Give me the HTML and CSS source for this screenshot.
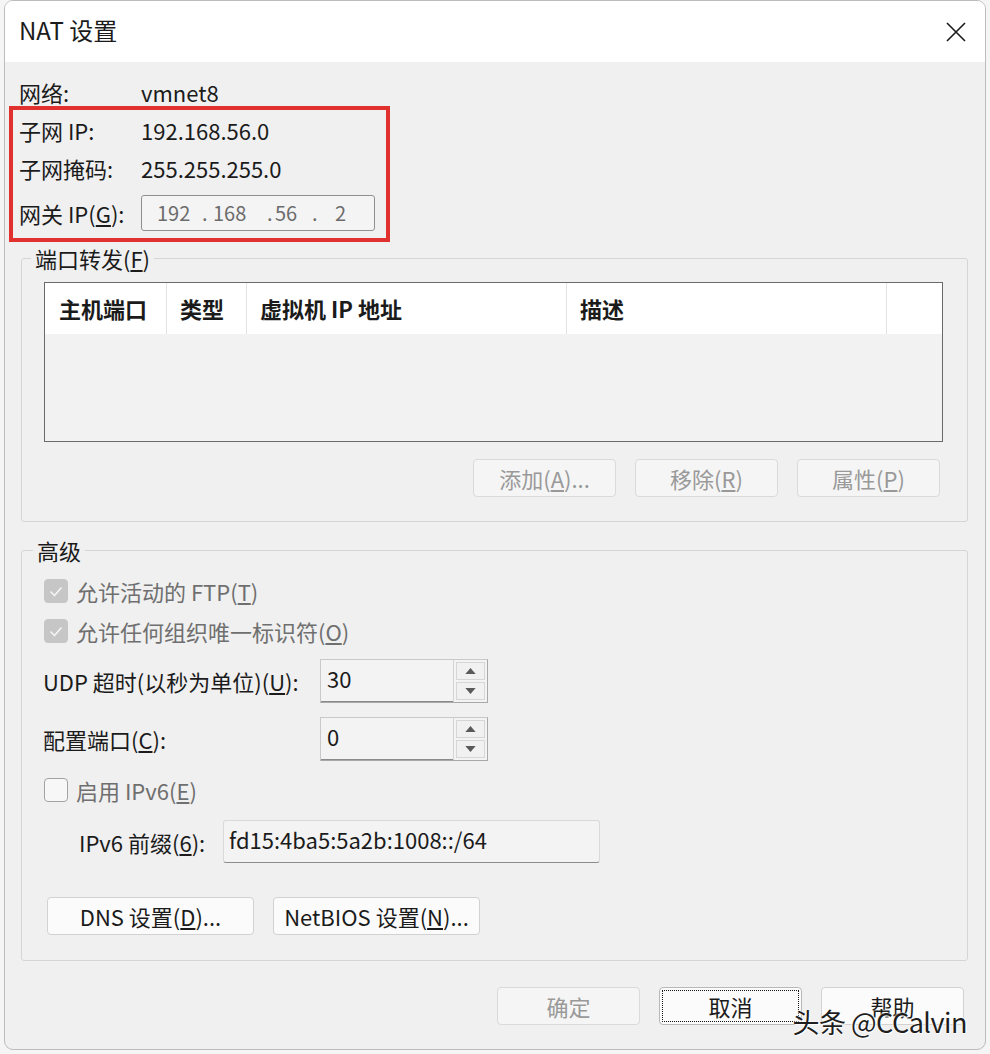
FILE: index.html
```html
<!DOCTYPE html>
<html lang="zh-CN">
<head>
<meta charset="utf-8">
<title>NAT 设置</title>
<link rel="stylesheet" href="styles.css">
</head>
<body>
<div class="window">
  <div class="titlebar">
    <span class="title">NAT 设置</span>
    <svg class="close" viewBox="0 0 20 20" width="20" height="20"><path d="M1 1 L19 19 M19 1 L1 19" stroke="#1a1a1a" stroke-width="1.6" fill="none"/></svg>
  </div>
  <div class="content">
    <div class="info-row net"><span class="lbl">网络:</span><span class="val">vmnet8</span></div>
    <div class="highlight">
      <div class="info-row"><span class="lbl">子网 IP:</span><span class="val">192.168.56.0</span></div>
      <div class="info-row"><span class="lbl">子网掩码:</span><span class="val">255.255.255.0</span></div>
      <div class="info-row gw"><span class="lbl">网关 IP(<u>G</u>):</span>
        <div class="ipbox"><span class="oct o1">192</span><span class="dot d1">.</span><span class="oct o2">168</span><span class="dot d2">.</span><span class="oct o3">56</span><span class="dot d3">.</span><span class="oct">2</span></div>
      </div>
    </div>

    <fieldset class="group pf">
      <legend>端口转发(<u>F</u>)</legend>
      <div class="table">
        <div class="thead">
          <div class="th c1">主机端口</div>
          <div class="th c2">类型</div>
          <div class="th c3">虚拟机 IP 地址</div>
          <div class="th c4">描述</div>
          <div class="th c5"></div>
        </div>
        <div class="tbody"></div>
      </div>
      <div class="btnrow">
        <button class="btn" disabled>添加(<u>A</u>)...</button>
        <button class="btn" disabled>移除(<u>R</u>)</button>
        <button class="btn" disabled>属性(<u>P</u>)</button>
      </div>
    </fieldset>

    <fieldset class="group adv">
      <legend>高级</legend>
      <div class="cbrow"><span class="cb checked"><svg viewBox="0 0 24 24" width="24" height="24"><path d="M6.5 12.5 L10.5 16.5 L17.5 8.5" stroke="#f4f4f4" stroke-width="1.6" fill="none"/></svg></span>允许活动的 FTP(<u>T</u>)</div>
      <div class="cbrow"><span class="cb checked"><svg viewBox="0 0 24 24" width="24" height="24"><path d="M6.5 12.5 L10.5 16.5 L17.5 8.5" stroke="#f4f4f4" stroke-width="1.6" fill="none"/></svg></span>允许任何组织唯一标识符(<u>O</u>)</div>
      <div class="spinrow udp"><span class="slbl">UDP 超时(以秒为单位)(<u>U</u>):</span>
        <div class="spin"><span class="stxt">30</span><span class="arrows"><span class="arrow"><svg viewBox="0 0 12 7" width="11" height="6"><path d="M6 0 L12 7 L0 7 Z" fill="#5a5a5a"/></svg></span><span class="arrow"><svg viewBox="0 0 12 7" width="11" height="6"><path d="M0 0 L12 0 L6 7 Z" fill="#5a5a5a"/></svg></span></span></div>
      </div>
      <div class="spinrow cfg"><span class="slbl">配置端口(<u>C</u>):</span>
        <div class="spin"><span class="stxt">0</span><span class="arrows"><span class="arrow"><svg viewBox="0 0 12 7" width="11" height="6"><path d="M6 0 L12 7 L0 7 Z" fill="#5a5a5a"/></svg></span><span class="arrow"><svg viewBox="0 0 12 7" width="11" height="6"><path d="M0 0 L12 0 L6 7 Z" fill="#5a5a5a"/></svg></span></span></div>
      </div>
      <div class="cbrow v6cb"><span class="cb"></span>启用 IPv6(<u>E</u>)</div>
      <div class="v6row"><span class="v6lbl">IPv6 前缀(<u>6</u>):</span><div class="v6box">fd15:4ba5:5a2b:1008::/64</div></div>
      <div class="dnsrow">
        <button class="btn wide">DNS 设置(<u>D</u>)...</button>
        <button class="btn wide">NetBIOS 设置(<u>N</u>)...</button>
      </div>
    </fieldset>

    <div class="footer">
      <button class="btn" disabled>确定</button>
      <button class="btn focus">取消</button>
      <button class="btn">帮助</button>
    </div>
  </div>
  <div class="watermark">头条 @CCalvin</div>
</div>
</body>
</html>
```

FILE: styles.css
```css
* { box-sizing: border-box; }
html, body { margin: 0; padding: 0; }
body {
  width: 990px;
  height: 1054px;
  overflow: hidden;
  background: #f5f5f5;
  font-family: "Noto Sans CJK SC", "Liberation Sans", sans-serif;
  font-size: 22px;
  color: #1b1b1b;
}
u { text-decoration: underline; text-underline-offset: 2px; }

.window {
  position: relative;
  margin-left: 4px;
  width: 982px;
  height: 1050px;
  border: 1px solid #bcbcbc;
  border-radius: 9px;
  background: #f0f0f0;
  overflow: hidden;
}
.titlebar {
  height: 61px;
  background: #ffffff;
  display: flex;
  align-items: center;
  justify-content: space-between;
  padding: 0 19px 0 14px;
}
.title { font-size: 24px; line-height: 1; margin-top: -4px; }
.close { display: block; margin-top: 1px; }

.content { padding: 18px 16px 0 14px; }

.info-row { display: flex; align-items: center; height: 38px; line-height: 38px; }
.info-row.net { height: 26px; line-height: 24px; align-items: flex-start; }
.lbl { width: 122px; flex: none; }

.highlight {
  margin-left: -10px;
  width: 381px;
  border: 4px solid #e0312e;
  padding: 1px 0 7px 6px;
}
.info-row.gw { height: 36px; margin-top: 8px; }
.ipbox {
  width: 234px;
  height: 36px;
  border: 1px solid #8f8f8f;
  border-radius: 3px;
  background: #f4f4f4;
  color: #6c6c6c;
  display: flex;
  align-items: center;
  padding-left: 15px;
  line-height: 1;
  font-size: 20px;
}
.o1 { width: 45px; }
.d1 { width: 11px; }
.o2 { width: 54px; }
.d2 { width: 8px; }
.o3 { width: 37px; }
.d3 { width: 23px; }

fieldset.group {
  margin: 3px 1px 0 2px;
  padding: 11px 24px 24px 22px;
  border: 1px solid #d5d5d5;
  border-radius: 3px;
  min-width: 0;
}
fieldset.group legend {
  padding: 0 4px;
  margin-left: -13px;
  height: 26px;
  line-height: 26px;
}
fieldset.adv { margin-top: 15px; padding: 8px 24px 25px 22px; }
fieldset.adv legend { margin-left: -11px; }

.table {
  height: 160px;
  border: 1px solid #6a6a6a;
  background: #f2f2f2;
  display: flex;
  flex-direction: column;
}
.thead {
  height: 51px;
  flex: none;
  background: #ffffff;
  display: flex;
  font-weight: bold;
}
.th {
  height: 51px;
  line-height: 51px;
  padding-left: 13px;
  border-right: 1px solid #e3e3e3;
  white-space: nowrap;
}
.c1 { width: 122px; padding-left: 14px; }
.c2 { width: 80px; }
.c3 { width: 320px; }
.c4 { width: 320px; }
.c5 { flex: 1; border-right: none; }
.tbody { flex: 1; }

.btn {
  height: 38px;
  width: 143px;
  padding: 0;
  border: 1px solid #d2d2d2;
  border-radius: 4px;
  background: #fbfbfb;
  font: inherit;
  color: #1b1b1b;
  line-height: 36px;
}
.btn:disabled { color: #999999; background: #f5f5f5; border-color: #dadada; }
.btnrow {
  display: flex;
  justify-content: flex-end;
  gap: 19px;
  margin: 17px 3px 0 0;
}

.cbrow {
  display: flex;
  align-items: center;
  height: 40px;
  color: #6f6f6f;
}
.cb {
  width: 24px;
  height: 24px;
  flex: none;
  border-radius: 4px;
  margin-right: 8px;
  border: 1px solid #a3a3a3;
  background: #f7f7f7;
}
.cb.checked { background: #c6c6c6; border-color: #c6c6c6; }
.cb svg { display: block; margin: -1px; }

.spinrow { display: flex; align-items: center; height: 44px; }
.spinrow.udp { margin-top: 8px; }
.spinrow.cfg { margin-top: 14px; }
.slbl { width: 277px; flex: none; margin-left: -1px; }
.spin {
  width: 168px;
  height: 44px;
  display: flex;
  border: 1px solid #a8a8a8;
  border-top-color: #c9c9c9;
  border-left-color: #c9c9c9;
  background: #f3f3f3;
}
.stxt { flex: 1; padding: 0 0 0 6px; line-height: 36px; border-bottom: 1px solid #8a8a8a; }
.arrows {
  width: 34px;
  flex: none;
  display: flex;
  flex-direction: column;
  gap: 2px;
  padding: 2px;
  border-left: 1px solid #d4d4d4;
}
.arrow {
  flex: 1;
  display: flex;
  align-items: center;
  justify-content: center;
  border: 1px solid #d6d6d6;
  background: #f1f1f1;
}
.arrow svg { display: block; }

.v6cb { margin-top: 9px; }
.v6row { display: flex; align-items: center; height: 43px; margin-top: 10px; padding-left: 35px; }
.v6lbl { width: 144px; flex: none; }
.v6box {
  width: 377px;
  height: 43px;
  border: 1px solid #d9d9d9;
  border-bottom-color: #8c8c8c;
  border-radius: 3px;
  background: #f3f3f3;
  padding: 0 0 0 5px;
  line-height: 36px;
}

.dnsrow { display: flex; gap: 19px; margin: 34px 0 0 3px; }
.btn.wide { width: 207px; }

.footer {
  display: flex;
  justify-content: flex-end;
  gap: 19px;
  margin: 26px 5px 0 0;
}
.btn.focus { border-color: #b8b8b8; outline: 1px dotted #111; outline-offset: -4px; }

.watermark {
  position: absolute;
  right: 18px;
  bottom: 14px;
  font-size: 27px;
  line-height: 1;
  color: #1e1e1e;
  text-shadow: 0 0 2px #fff, 0 0 2px #fff, 1px 1px 1px #fff;
  letter-spacing: -0.5px;
}
```
